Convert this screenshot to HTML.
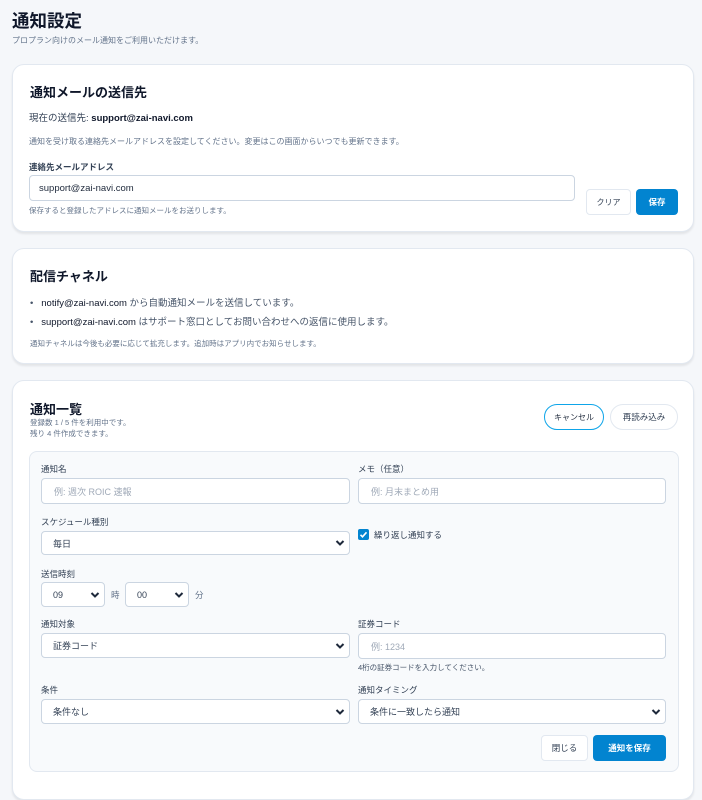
<!DOCTYPE html>
<html><head><meta charset="utf-8"><style>
*{box-sizing:border-box;margin:0;padding:0}
body{width:702px;height:779px;overflow:hidden;background:#f5f7fa;font-family:"Liberation Sans","Noto Sans CJK JP",sans-serif;color:#1e293b;position:relative}
.a{position:absolute;white-space:nowrap}
.card{position:absolute;left:12px;width:682px;background:#fff;border:1px solid #e2e8f0;border-radius:12px;box-shadow:0 2px 2px rgba(0,0,0,.08)}
.h{font-size:13px;font-weight:bold;color:#0f172a}
.g{color:#64748b}
.inp{position:absolute;background:#fff;border:1px solid #cbd5e1;border-radius:4px;font-size:9px;padding-left:12px;display:flex;align-items:center}
.ph{color:#a0aab8}
.sel{position:absolute;background:#fff;border:1px solid #cbd5e1;border-radius:4px;font-size:9px;padding-left:11px;display:flex;align-items:center;color:#334155}
.sel svg{position:absolute;right:4px;top:50%;margin-top:-4px}
.lbl{font-size:8.5px;color:#334155}
.btn{position:absolute;display:flex;align-items:center;justify-content:center;font-size:8.5px;border-radius:4px}
</style></head><body>
<div class="a" style="left:12px;top:8px;font-size:17.5px;font-weight:bold;color:#0f172a">通知設定</div>
<div class="a g" style="left:12px;top:35px;font-size:8px">プロプラン向けのメール通知をご利用いただけます。</div>

<div class="card" style="top:64px;height:168px"></div>
<div class="a h" style="left:30px;top:82px">通知メールの送信先</div>
<div class="a" style="left:29px;top:110px;font-size:9.5px;color:#334155">現在の送信先: <b style="color:#0f172a">support@zai-navi.com</b></div>
<div class="a g" style="left:29px;top:136px;font-size:8px">通知を受け取る連絡先メールアドレスを設定してください。変更はこの画面からいつでも更新できます。</div>
<div class="a" style="left:29px;top:161px;font-size:8.5px;font-weight:bold;color:#334155">連絡先メールアドレス</div>
<div class="inp" style="left:29px;top:175px;width:546px;height:26px;padding-left:9px;color:#1e293b;font-size:9.5px">support@zai-navi.com</div>
<div class="a g" style="left:29px;top:205px;font-size:7.5px">保存すると登録したアドレスに通知メールをお送りします。</div>
<div class="btn" style="left:586px;top:189px;width:45px;height:26px;border:1px solid #e2e8f0;color:#334155;font-size:8px">クリア</div>
<div class="btn" style="left:636px;top:189px;width:42px;height:26px;background:#0284d0;color:#fff;font-weight:bold">保存</div>

<div class="card" style="top:248px;height:116px"></div>
<div class="a h" style="left:30px;top:266px">配信チャネル</div>
<div class="a" style="left:30px;top:295px;font-size:9.5px;color:#475569">•&nbsp;&nbsp;&nbsp;<span style="color:#0f172a">notify@zai-navi.com</span> から自動通知メールを送信しています。</div>
<div class="a" style="left:30px;top:314px;font-size:9.5px;color:#475569">•&nbsp;&nbsp;&nbsp;<span style="color:#0f172a">support@zai-navi.com</span> はサポート窓口としてお問い合わせへの返信に使用します。</div>
<div class="a g" style="left:30px;top:338px;font-size:7.5px">通知チャネルは今後も必要に応じて拡充します。追加時はアプリ内でお知らせします。</div>

<div class="card" style="top:380px;height:420px"></div>
<div class="a h" style="left:30px;top:399px">通知一覧</div>
<div class="a g" style="left:30px;top:417px;font-size:7.5px">登録数 1 / 5 件を利用中です。</div>
<div class="a g" style="left:30px;top:428px;font-size:7.5px">残り 4 件作成できます。</div>
<div class="btn" style="left:544px;top:404px;width:60px;height:26px;border:1px solid #0ea5e9;border-radius:13px;color:#1e293b;font-size:8px">キャンセル</div>
<div class="btn" style="left:610px;top:404px;width:68px;height:26px;border:1px solid #e2e8f0;border-radius:13px;color:#334155;font-size:8.5px">再読み込み</div>

<div class="a" style="left:29px;top:451px;width:650px;height:321px;background:#f8fafc;border:1px solid #e2e8f0;border-radius:8px"></div>

<div class="a lbl" style="left:41px;top:463px">通知名</div>
<div class="inp" style="left:41px;top:478px;width:309px;height:26px"><span class="ph">例: 週次 ROIC 速報</span></div>
<div class="a lbl" style="left:358px;top:463px">メモ（任意）</div>
<div class="inp" style="left:358px;top:478px;width:308px;height:26px"><span class="ph">例: 月末まとめ用</span></div>

<div class="a lbl" style="left:41px;top:516px">スケジュール種別</div>
<div class="sel" style="left:41px;top:531px;width:309px;height:24px">毎日<svg width="10" height="8" viewBox="0 0 10 8"><path d="M1.5 2l3.5 3.5L8.5 2" stroke="#1e293b" stroke-width="2" fill="none"/></svg></div>
<div class="a" style="left:358px;top:529px;width:11px;height:11px;background:#0284d0;border-radius:2px"><svg width="11" height="11" viewBox="0 0 11 11" style="position:absolute;left:0;top:0"><path d="M2.5 5.8l2 2 4-4.5" stroke="#fff" stroke-width="1.6" fill="none"/></svg></div>
<div class="a" style="left:374px;top:529px;font-size:8.5px;color:#334155">繰り返し通知する</div>

<div class="a lbl" style="left:41px;top:568px">送信時刻</div>
<div class="sel" style="left:41px;top:582px;width:64px;height:25px">09<svg width="10" height="8" viewBox="0 0 10 8"><path d="M1.5 2l3.5 3.5L8.5 2" stroke="#1e293b" stroke-width="2" fill="none"/></svg></div>
<div class="a g" style="left:111px;top:589px;font-size:8.5px">時</div>
<div class="sel" style="left:125px;top:582px;width:64px;height:25px">00<svg width="10" height="8" viewBox="0 0 10 8"><path d="M1.5 2l3.5 3.5L8.5 2" stroke="#1e293b" stroke-width="2" fill="none"/></svg></div>
<div class="a g" style="left:195px;top:589px;font-size:8.5px">分</div>

<div class="a lbl" style="left:41px;top:618px">通知対象</div>
<div class="sel" style="left:41px;top:633px;width:309px;height:25px">証券コード<svg width="10" height="8" viewBox="0 0 10 8"><path d="M1.5 2l3.5 3.5L8.5 2" stroke="#1e293b" stroke-width="2" fill="none"/></svg></div>
<div class="a lbl" style="left:358px;top:618px">証券コード</div>
<div class="inp" style="left:358px;top:633px;width:308px;height:26px"><span class="ph">例: 1234</span></div>
<div class="a g" style="left:358px;top:662px;font-size:7.5px;color:#475569">4桁の証券コードを入力してください。</div>

<div class="a lbl" style="left:41px;top:684px">条件</div>
<div class="sel" style="left:41px;top:699px;width:309px;height:25px">条件なし<svg width="10" height="8" viewBox="0 0 10 8"><path d="M1.5 2l3.5 3.5L8.5 2" stroke="#1e293b" stroke-width="2" fill="none"/></svg></div>
<div class="a lbl" style="left:358px;top:684px">通知タイミング</div>
<div class="sel" style="left:358px;top:699px;width:308px;height:25px">条件に一致したら通知<svg width="10" height="8" viewBox="0 0 10 8"><path d="M1.5 2l3.5 3.5L8.5 2" stroke="#1e293b" stroke-width="2" fill="none"/></svg></div>

<div class="btn" style="left:541px;top:735px;width:47px;height:26px;border:1px solid #e2e8f0;background:#fff;color:#334155">閉じる</div>
<div class="btn" style="left:593px;top:735px;width:73px;height:26px;background:#0284d0;color:#fff;font-weight:bold">通知を保存</div>
</body></html>
